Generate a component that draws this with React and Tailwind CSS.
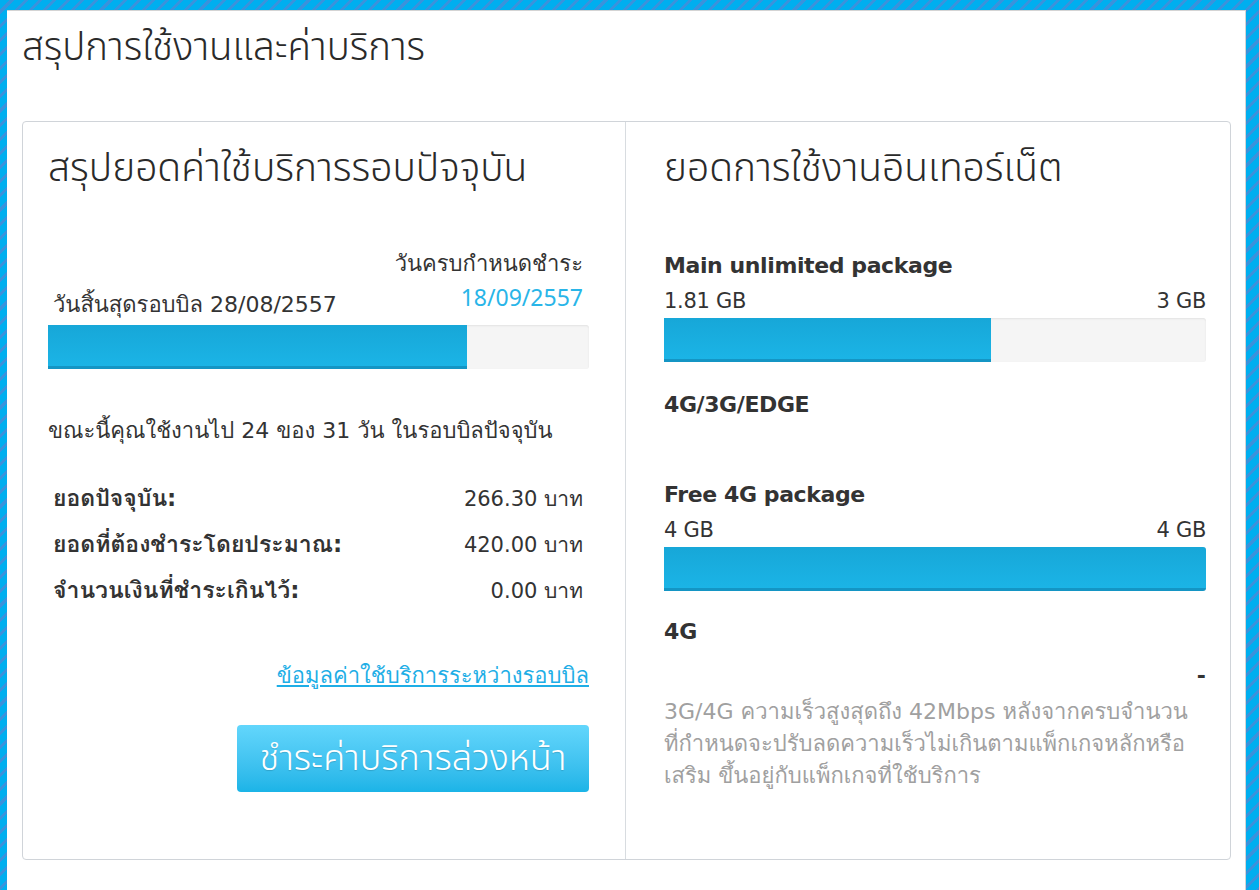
import React from 'react';

const thin = { fontFamily: "'Noto Sans Thai', 'Noto Sans', 'DejaVu Sans', sans-serif" };

const Bar = ({ pct }) => (
  <div className="h-[44px] w-full rounded-r-[3px] bg-[#f5f5f5] shadow-[inset_0_1px_2px_rgba(0,0,0,0.08)] overflow-hidden">
    <div
      className="h-full bg-gradient-to-b from-[#17a7d8] to-[#1bb4e6] border-b-[3px] border-[#1495c4]"
      style={{ width: pct + '%' }}
    />
  </div>
);

const App = () => {
  return (
    <div className="h-[890px] w-[1259px] pt-[10px] pl-[7px] pr-[13px] bg-[repeating-linear-gradient(135deg,#00aeef_0px,#00aeef_7px,#3a92dc_7px,#3a92dc_10px)] font-['DejaVu_Sans','Waree','Loma','Noto_Sans_Thai_Looped','Noto_Sans_Thai',sans-serif] text-[#333]">
      <div className="h-full bg-white border-t border-r border-[#d4d4d4] pl-[15px] pr-[14px]">
        <h1 className="pt-[13px] h-[110px] text-[38.5px] font-light text-[#2a2a2a] leading-[48px]" style={thin}>
          สรุปการใช้งานและค่าบริการ
        </h1>
        <div className="flex h-[739px] border border-[#d0d4d9] rounded-[4px]">
          <div className="w-[603px] border-r border-[#d8dce0] pl-[25px] pr-[36px] pt-[24px]">
            <h2 className="text-[39px] font-light leading-[48px] text-[#2a2a2a]" style={thin}>
              สรุปยอดค่าใช้บริการรอบปัจจุบัน
            </h2>
            <div className="mt-[54px] flex justify-between items-end text-[22px] leading-[32px]">
              <div className="pl-[5px]">วันสิ้นสุดรอบบิล 28/08/2557</div>
              <div className="text-right pr-[6px]">
                <div>วันครบกำหนดชำระ</div>
                <div className="text-[#29b5e8] text-[23px] leading-[38px] pb-[3px]" style={thin}>18/09/2557</div>
              </div>
            </div>
            <div className="mt-[4px]">
              <Bar pct={77.4} />
            </div>
            <p className="mt-[47px] text-[22px] leading-[30px]">ขณะนี้คุณใช้งานไป 24 ของ 31 วัน ในรอบบิลปัจจุบัน</p>
            <div className="mt-[37px] pl-[5px] pr-[6px] text-[21px] leading-[30px] flex flex-col gap-[15px]">
              <div className="flex justify-between items-baseline">
                <span className="font-bold text-[23px]">ยอดปัจจุบัน:</span>
                <span>266.30 บาท</span>
              </div>
              <div className="flex justify-between items-baseline">
                <span className="font-bold text-[23px]">ยอดที่ต้องชำระโดยประมาณ:</span>
                <span>420.00 บาท</span>
              </div>
              <div className="flex justify-between items-baseline">
                <span className="font-bold text-[23px]">จำนวนเงินที่ชำระเกินไว้:</span>
                <span>0.00 บาท</span>
              </div>
            </div>
            <div className="mt-[55px] text-right text-[22px] leading-[30px]">
              <a href="#" className="text-[#1eaee6] underline">ข้อมูลค่าใช้บริการระหว่างรอบบิล</a>
            </div>
            <div className="mt-[34px] flex justify-end">
              <button
                className="w-[352px] h-[67px] rounded-[4px] bg-gradient-to-b from-[#62d6fc] to-[#1ab4e7] text-white text-[36px] font-light [text-shadow:0_1px_1px_rgba(0,0,0,0.15)]"
                style={thin}
              >
                ชำระค่าบริการล่วงหน้า
              </button>
            </div>
          </div>
          <div className="flex-1 pl-[38px] pr-[24px] pt-[24px]">
            <h2 className="text-[39px] font-light leading-[48px] text-[#2a2a2a]" style={thin}>
              ยอดการใช้งานอินเทอร์เน็ต
            </h2>
            <div className="mt-[54px] text-[22px] leading-[36px] font-bold tracking-[-0.4px]">Main unlimited package</div>
            <div className="flex justify-between text-[21px] leading-[34px] tracking-[-0.3px]">
              <span>1.81 GB</span>
              <span>3 GB</span>
            </div>
            <Bar pct={60.3} />
            <div className="mt-[25px] text-[22px] leading-[36px] font-bold tracking-[-0.4px]">4G/3G/EDGE</div>
            <div className="mt-[54px] text-[22px] leading-[36px] font-bold tracking-[-0.4px]">Free 4G package</div>
            <div className="flex justify-between text-[21px] leading-[34px] tracking-[-0.3px]">
              <span>4 GB</span>
              <span>4 GB</span>
            </div>
            <Bar pct={100} />
            <div className="mt-[23px] text-[22px] leading-[36px] font-bold">4G</div>
            <div className="mt-[8px] text-right text-[22px] leading-[36px] font-bold">-</div>
            <p className="mt-[2px] text-[22px] leading-[32px] text-[#a0a0a0] whitespace-nowrap">
              3G/4G ความเร็วสูงสุดถึง 42Mbps หลังจากครบจำนวน
              <br />
              ที่กำหนดจะปรับลดความเร็วไม่เกินตามแพ็กเกจหลักหรือ
              <br />
              เสริม ขึ้นอยู่กับแพ็กเกจที่ใช้บริการ
            </p>
          </div>
        </div>
      </div>
    </div>
  );
};

export default App;
